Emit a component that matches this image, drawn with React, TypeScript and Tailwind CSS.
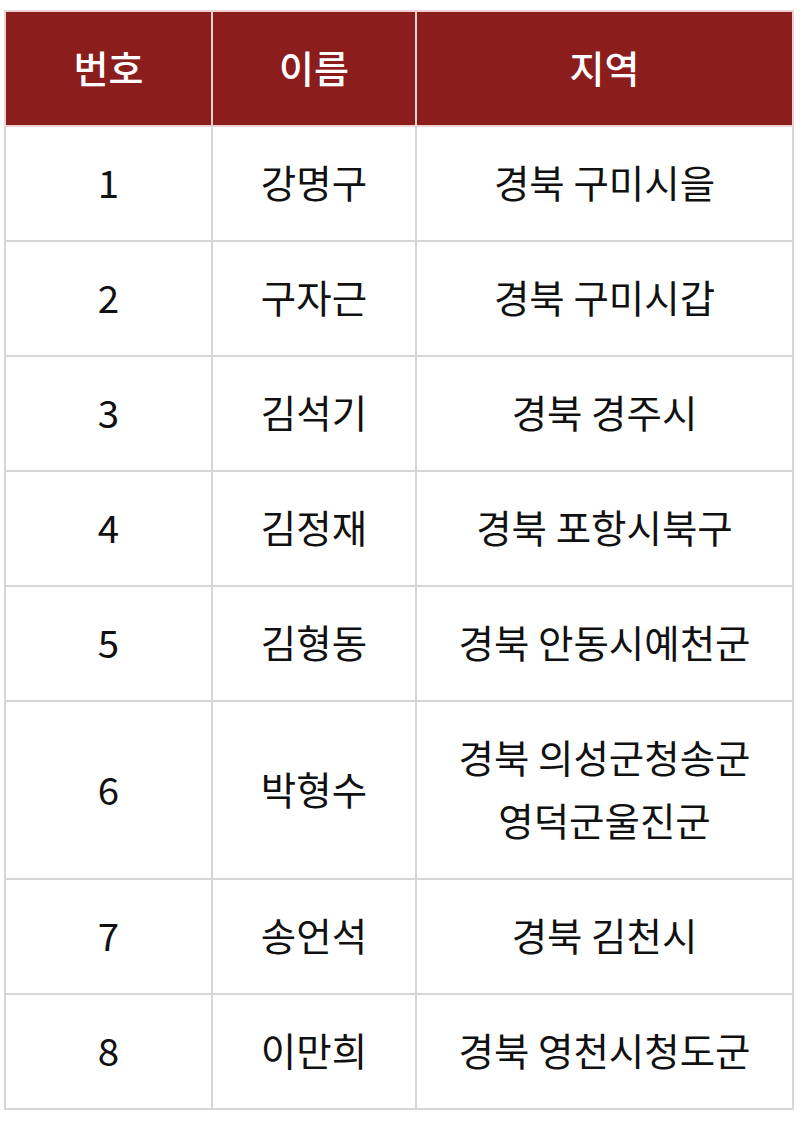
const rows = [
  { no: "1", name: "강명구", region: ["경북 구미시을"] },
  { no: "2", name: "구자근", region: ["경북 구미시갑"] },
  { no: "3", name: "김석기", region: ["경북 경주시"] },
  { no: "4", name: "김정재", region: ["경북 포항시북구"] },
  { no: "5", name: "김형동", region: ["경북 안동시예천군"] },
  { no: "6", name: "박형수", region: ["경북 의성군청송군", "영덕군울진군"] },
  { no: "7", name: "송언석", region: ["경북 김천시"] },
  { no: "8", name: "이만희", region: ["경북 영천시청도군"] },
]

const headers = ["번호", "이름", "지역"]

export default function App() {
  return (
    <div className="min-h-[1121px] w-[800px] bg-white pt-[10px] pl-[4px] font-['Noto_Sans_CJK_KR','Noto_Sans',sans-serif]">
      <table className="w-[788px] table-fixed border-collapse text-center">
        <colgroup>
          <col className="w-[207px]" />
          <col className="w-[204px]" />
          <col className="w-[377px]" />
        </colgroup>
        <thead>
          <tr className="bg-[#8b1d1d]">
            {headers.map((h) => (
              <th
                key={h}
                className="h-[115px] border-2 border-[#ecd2d2] p-0 pb-1 align-middle text-[38px] font-medium leading-none text-white"
              >
                {h}
              </th>
            ))}
          </tr>
        </thead>
        <tbody>
          {rows.map((r) => (
            <tr key={r.no}>
              <td className="border-2 border-[#d6d6d6] pt-[23px] pb-[27px] text-[38.5px] leading-[63px] text-[#111]">{r.no}</td>
              <td className="border-2 border-[#d6d6d6] pt-[23px] pb-[27px] text-[38.5px] leading-[63px] text-[#111]">{r.name}</td>
              <td className="border-2 border-[#d6d6d6] pt-[23px] pb-[27px] text-[38.5px] leading-[63px] text-[#111]">
                {r.region.map((line) => (
                  <div key={line}>{line}</div>
                ))}
              </td>
            </tr>
          ))}
        </tbody>
      </table>
    </div>
  )
}
